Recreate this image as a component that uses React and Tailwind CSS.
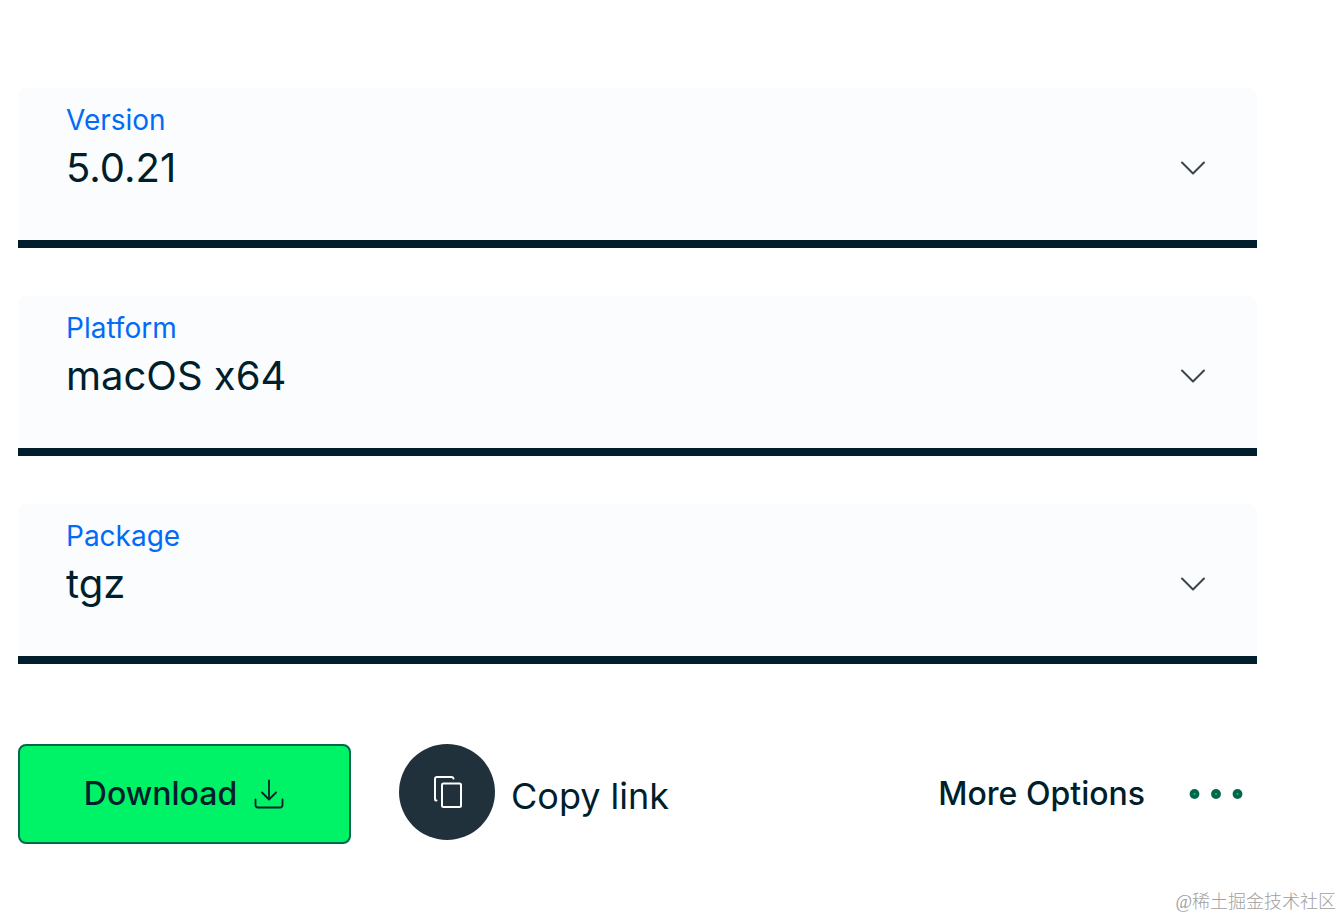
import React, { useState } from 'react';

const fields = [
  { id: 'version', label: 'Version', options: ['5.0.21', '4.4.25', '4.2.24'] },
  { id: 'platform', label: 'Platform', options: ['macOS x64', 'Windows x64', 'Ubuntu 20.04'] },
  { id: 'package', label: 'Package', options: ['tgz', 'server', 'shell'] },
];

const ChevronIcon = () => (
  <svg width="26" height="16" viewBox="0 0 26 16" fill="none" stroke="#3d4449" strokeWidth="2" strokeLinecap="round" strokeLinejoin="round">
    <path d="M2 2.5 L13 13.5 L24 2.5" />
  </svg>
);

const DownloadIcon = () => (
  <svg width="32" height="32" viewBox="0 0 32 32" fill="none" stroke="#001e2b" strokeWidth="1.8" strokeLinecap="round" strokeLinejoin="round">
    <path d="M16 2.5 V21 M9 14.5 L16 21.5 L23 14.5" />
    <path d="M2.500 21.5 V27 Q2.500 29.500 5 29.500 H27 Q29.500 29.500 29.500 27 V21.5" />
  </svg>
);

const CopyIcon = () => (
  <svg width="32" height="36" viewBox="0 0 32 36" fill="none" stroke="#ffffff" strokeWidth="2" strokeLinecap="round" strokeLinejoin="round">
    <path d="M5.500 26.500 H5 Q4 26.500 4 25 V5 Q4 3 6 3 H20.500 Q22 3 22.500 4.500" />
    <rect x="11" y="9.500" width="19" height="23.500" rx="1.500" />
  </svg>
);

const DotsIcon = () => (
  <svg width="54" height="12" viewBox="0 0 54 12">
    {[5.5, 27, 48.5].map((cx) => (
      <g key={cx}>
        <circle cx={cx} cy="6" r="4.9" fill="#00684a" />
        <circle cx={cx} cy="6" r="1" fill="#4f9f83" />
      </g>
    ))}
  </svg>
);

const SelectField = ({ field }) => {
  const [value, setValue] = useState(field.options[0]);

  return (
    <div className="relative rounded-t-lg bg-[#fafcfe]">
      <div className="border-b-8 border-[#001e2b] pt-4 pb-10">
        <label htmlFor={field.id} className="block px-12 text-[28px] leading-8 text-[#016bf8]">
          {field.label}
        </label>
        <select
          id={field.id}
          value={value}
          onChange={(e) => setValue(e.target.value)}
          className="block h-16 w-full appearance-none bg-transparent px-12 text-[40px] text-[#001e2b] focus:outline-none"
        >
          {field.options.map((option) => (
            <option key={option}>{option}</option>
          ))}
        </select>
      </div>
      <span className="pointer-events-none absolute top-[72px] right-[51px]">
        <ChevronIcon />
      </span>
    </div>
  );
};

const App = () => {
  return (
    <div className="flex min-h-screen flex-col bg-white font-['Inter',sans-serif] text-[#001e2b]">
      <main className="pt-[88px] pr-[85px] pl-[18px]">
        <form className="flex flex-col gap-12" onSubmit={(e) => e.preventDefault()}>
          {fields.map((field) => (
            <SelectField key={field.id} field={field} />
          ))}
        </form>

        <div className="mt-20 flex items-start justify-between">
          <div className="flex items-start gap-12">
            <button
              type="button"
              className="flex h-[100px] w-[333px] items-center justify-center gap-4 rounded-lg border-2 border-[#00684a] bg-[#00f266] text-[32px] font-medium"
            >
              Download
              <DownloadIcon />
            </button>
            <button type="button" className="flex items-center gap-4 text-[36px]">
              <span className="flex size-24 items-center justify-center rounded-full bg-[#21313c]">
                <CopyIcon />
              </span>
              <span className="pt-2">Copy link</span>
            </button>
          </div>
          <button type="button" className="flex h-[100px] items-center gap-11 pr-3.5 text-[32px] font-medium">
            More Options
            <DotsIcon />
          </button>
        </div>
      </main>

      <footer className="mt-auto pr-1.5 pb-1 text-right font-['Liberation_Serif','Noto_Sans_CJK_SC',sans-serif] text-[18px] leading-6 font-light text-[#a0a0a0]">
        @稀土掘金技术社区
      </footer>
    </div>
  );
};

export default App;
